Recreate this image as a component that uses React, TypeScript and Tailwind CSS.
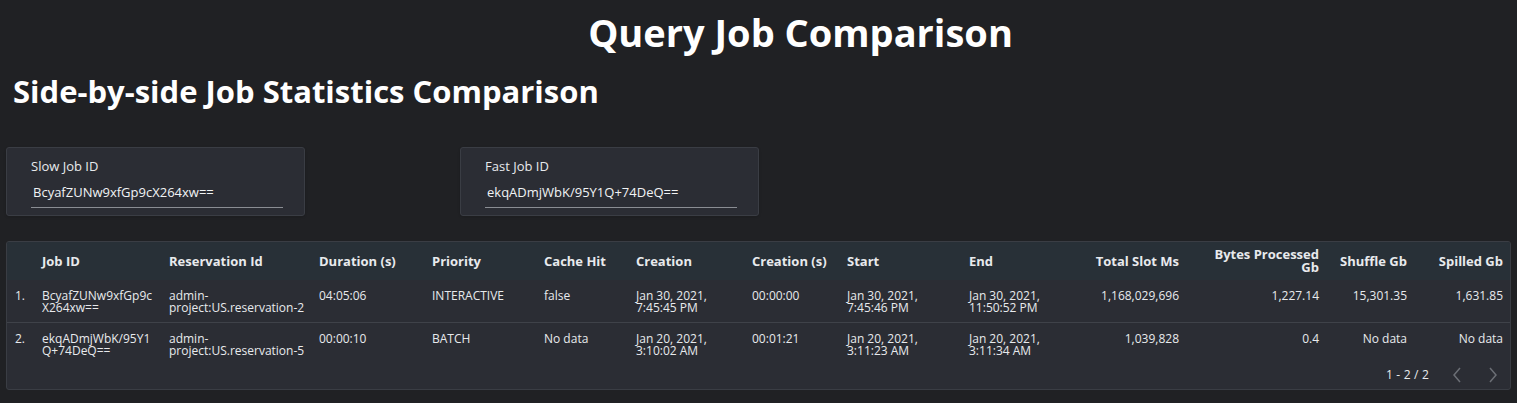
const columns = [
  { label: "", align: "left" },
  { label: "Job ID", align: "left" },
  { label: "Reservation Id", align: "left" },
  { label: "Duration (s)", align: "left" },
  { label: "Priority", align: "left" },
  { label: "Cache Hit", align: "left" },
  { label: "Creation", align: "left" },
  { label: "Creation (s)", align: "left" },
  { label: "Start", align: "left" },
  { label: "End", align: "left" },
  { label: "Total Slot Ms", align: "right" },
  { label: "Bytes Processed Gb", align: "right" },
  { label: "Shuffle Gb", align: "right" },
  { label: "Spilled Gb", align: "right" },
];

const rows = [
  [
    "1.",
    "BcyafZUNw9xfGp9cX264xw==",
    "admin-project:US.reservation-2",
    "04:05:06",
    "INTERACTIVE",
    "false",
    "Jan 30, 2021, 7:45:45 PM",
    "00:00:00",
    "Jan 30, 2021, 7:45:46 PM",
    "Jan 30, 2021, 11:50:52 PM",
    "1,168,029,696",
    "1,227.14",
    "15,301.35",
    "1,631.85",
  ],
  [
    "2.",
    "ekqADmjWbK/95Y1Q+74DeQ==",
    "admin-project:US.reservation-5",
    "00:00:10",
    "BATCH",
    "No data",
    "Jan 20, 2021, 3:10:02 AM",
    "00:01:21",
    "Jan 20, 2021, 3:11:23 AM",
    "Jan 20, 2021, 3:11:34 AM",
    "1,039,828",
    "0.4",
    "No data",
    "No data",
  ],
];

const grid =
  "grid grid-cols-[27px_127px_150px_113px_112px_92px_116px_95px_122px_100px_118px_140px_88px_96px]";

function JobInput({ label, value }: { label: string; value: string }) {
  return (
    <div className="h-[69px] w-[299px] rounded-[3px] border border-[#3a3d44] bg-[#2b2d34] pl-6 pr-[21px] pt-[9px] shadow-sm">
      <div className="text-[13px] leading-[18px] text-[#e8eaed]">{label}</div>
      <div className="mt-[9px] border-b border-[#8a8d93] pb-[6px] pl-[2px] text-[13px] leading-[17px] text-[#f1f3f4]">
        {value}
      </div>
    </div>
  );
}

export default function App() {
  return (
    <div className="min-h-[403px] w-full bg-[#202124] font-['Open_Sans',sans-serif] text-[#e8eaed]">
      <h1 className="flex justify-center pl-[84px] pt-[6px] text-[38px] font-bold leading-[52px] text-white">
        Query Job Comparison
      </h1>
      <h2 className="pl-[13px] pt-[12px] text-[31px] font-bold leading-[42px] text-white">
        Side-by-side Job Statistics Comparison
      </h2>

      <div className="mt-[35px] flex gap-[155px] pl-[6px]">
        <JobInput label="Slow Job ID" value="BcyafZUNw9xfGp9cX264xw==" />
        <JobInput label="Fast Job ID" value="ekqADmjWbK/95Y1Q+74DeQ==" />
      </div>

      <div className="ml-[6px] mr-[6px] mt-[25px] h-[149px] overflow-hidden rounded-[3px] border border-[#3a3d44] bg-[#2b2d34]">
        <div className={`${grid} h-[38px] items-center bg-[#283037] pl-[8px] text-[13px] font-bold leading-[13px] text-[#e8eaed]`}>
          {columns.map((c, i) =>
            c.align === "right" ? (
              <div key={i} className="flex justify-end pr-[8px]">
                <span className={i === 11 ? "max-w-[112px] text-right" : "text-right"}>{c.label}</span>
              </div>
            ) : (
              <div key={i}>{c.label}</div>
            )
          )}
        </div>

        {rows.map((row, r) => (
          <div
            key={r}
            className={`${grid} pl-[8px] pt-[10px] text-[12px] leading-[12px] text-[#e8eaed] ${
              r === 0 ? "h-[43px] border-b border-[#3f4249]" : "h-[40px] pt-[9px]"
            }`}
          >
            {row.map((cell, i) =>
              columns[i].align === "right" ? (
                <div key={i} className="pr-[8px] text-right">
                  {cell}
                </div>
              ) : (
                <div
                  key={i}
                  className={
                    i === 1
                      ? "pr-[12px] break-all"
                      : i === 0
                        ? ""
                        : "pr-[14px]"
                  }
                >
                  {cell}
                </div>
              )
            )}
          </div>
        ))}

        <div className="flex items-center justify-end gap-[22px] pr-[11px] pt-[3px] text-[12px] tracking-[0.2px] text-[#e8eaed]">
          <span>1 - 2 / 2</span>
          <div className="flex items-center gap-[24px]">
            <svg width="12" height="18" viewBox="0 0 12 18" fill="none">
              <path d="M9 2 L3 9 L9 16" stroke="#6b6e75" strokeWidth="1.5" />
            </svg>
            <svg width="12" height="18" viewBox="0 0 12 18" fill="none">
              <path d="M3 2 L9 9 L3 16" stroke="#6b6e75" strokeWidth="1.5" />
            </svg>
          </div>
        </div>
      </div>
    </div>
  );
}
